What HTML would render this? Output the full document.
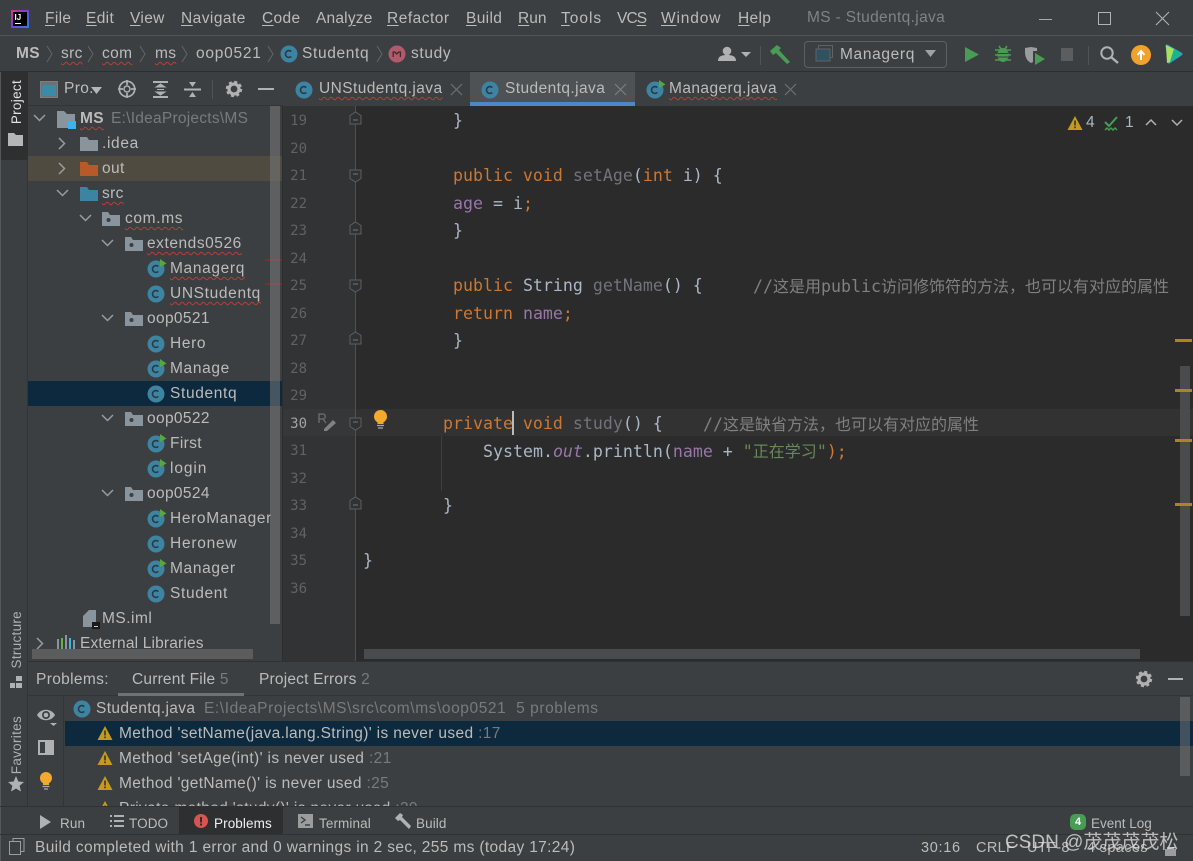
<!DOCTYPE html>
<html><head><meta charset="utf-8"><style>
html,body{margin:0;padding:0;background:#3c3f41}
#r{position:relative;width:1193px;height:861px;overflow:hidden;background:#3c3f41;font-family:"Liberation Sans","Noto Sans CJK SC",sans-serif;font-size:15.5px;letter-spacing:.35px;color:#bbbbbb}
.t{position:absolute;white-space:nowrap;line-height:20px;height:20px;margin-top:1px}
.b{position:absolute}
.s{text-decoration:underline wavy #b5403a 1px;text-underline-offset:3px;text-decoration-skip-ink:none}
.g{color:#787a7c}
.w{letter-spacing:.65px}
svg{position:absolute;overflow:visible}
.c{position:absolute;white-space:pre;font-family:"DejaVu Sans Mono","Noto Sans CJK SC",monospace;font-size:16.6px;letter-spacing:0;line-height:20px;color:#a9b7c6;margin-top:1px}
.c i.z{font-style:normal;font-family:"Noto Sans CJK SC",sans-serif;font-size:16px}
.k{color:#cc7832}.m{color:#72737a}.f{color:#9876aa}.q{color:#808080}.h{color:#6a8759}
.n{position:absolute;width:20px;left:287px;text-align:right;font-family:"DejaVu Sans Mono",monospace;font-size:14px;letter-spacing:0;line-height:20px;color:#606366;margin-top:1px}
.v{position:absolute;writing-mode:vertical-rl;transform:rotate(180deg);font-size:13.5px;letter-spacing:.3px;line-height:16px;white-space:nowrap}
.small{font-size:13.5px;letter-spacing:.1px}
u{text-underline-offset:2px}
</style></head><body><div id="r">
<svg width="0" height="0" style="position:absolute">
<defs>
<g id="cl"><circle cx="9" cy="9" r="8.5" fill="#3d84a3"/><path d="M11.3 6.6A3.4 3.4 0 1 0 11.3 11.4" fill="none" stroke="#2b3a42" stroke-width="1.6"/></g>
<g id="cr"><use href="#cl"/><path d="M13 -1L19.500 3.500L13 7Z" fill="#56a83c"/></g>
<g id="fo"><path d="M0 2h7l2 3h9v11H0Z" fill="#8a949c"/></g>
<g id="pk"><path d="M0 1h6l2 3h10v11H0Z" fill="#8a949c"/><circle cx="6.5" cy="9" r="2" fill="#3c3f41"/></g>
<path id="dn" d="M0 0L5.5 5.5L11 0" fill="none" stroke="#9a9c9e" stroke-width="1.5"/>
<path id="rt" d="M0 0L5.5 5.5L0 11" fill="none" stroke="#9a9c9e" stroke-width="1.5"/>
<g id="wn"><path d="M7 0L14.5 14H-.5Z" fill="#c69a1b"/><rect x="6.2" y="4.5" width="1.6" height="5" fill="#33363a"/><rect x="6.2" y="10.5" width="1.6" height="1.7" fill="#33363a"/></g>
<g id="gr"><circle cx="8" cy="8" r="5" fill="none" stroke="#afb1b3" stroke-width="3.2"/><circle cx="8" cy="8" r="7" fill="none" stroke="#afb1b3" stroke-width="2.4" stroke-dasharray="3 2.5"/></g>
<path id="fu" d="M0 12V3.5L5.5 0L11 3.5V12Z" fill="#2f3133" stroke="#5d5f61"/>
<path id="fd" d="M0 0V8.5L5.5 12L11 8.5V0Z" fill="#2f3133" stroke="#5d5f61"/>
</defs></svg>

<!-- title/menu -->
<div class="b" style="left:0;top:35px;width:1193px;height:1px;background:#515354"></div>
<div class="b" style="left:11px;top:10px;width:18px;height:18px;background:linear-gradient(135deg,#e0337b,#7a3fd0 45%,#2b7fe0);"></div>
<div class="b" style="left:13px;top:12px;width:14px;height:14px;background:#000"></div>
<div class="t" style="left:14.5px;top:7px;font-size:8px;font-weight:bold;color:#fff;letter-spacing:0">IJ</div>
<div class="b" style="left:15px;top:23px;width:6px;height:1px;background:#fff"></div>
<div class="t" style="left:45px;top:8px"><u>F</u>ile</div>
<div class="t" style="left:86px;top:8px"><u>E</u>dit</div>
<div class="t" style="left:130px;top:8px"><u>V</u>iew</div>
<div class="t" style="left:181px;top:8px;letter-spacing:.45px"><u>N</u>avigate</div>
<div class="t" style="left:262px;top:8px"><u>C</u>ode</div>
<div class="t" style="left:316px;top:8px;letter-spacing:.2px">Anal<u>y</u>ze</div>
<div class="t" style="left:387px;top:8px;letter-spacing:.5px"><u>R</u>efactor</div>
<div class="t" style="left:466px;top:8px"><u>B</u>uild</div>
<div class="t" style="left:518px;top:8px;letter-spacing:0"><u>R</u>un</div>
<div class="t" style="left:561px;top:8px;letter-spacing:1px"><u>T</u>ools</div>
<div class="t" style="left:617px;top:8px;letter-spacing:-.9px">VC<u>S</u></div>
<div class="t" style="left:661px;top:8px;letter-spacing:.85px"><u>W</u>indow</div>
<div class="t" style="left:738px;top:8px"><u>H</u>elp</div>
<div class="t" style="left:807px;top:7px;color:#808284">MS - Studentq.java</div>
<div class="b" style="left:1039px;top:19px;width:13px;height:1px;background:#a8aaac"></div>
<div class="b" style="left:1098px;top:12px;width:11px;height:11px;border:1px solid #b0b2b4"></div>
<svg style="left:1156px;top:12px" width="13" height="13"><path d="M0 0L13 13M13 0L0 13" stroke="#b0b2b4" stroke-width="1.1"/></svg>

<!-- nav bar -->
<div class="b" style="left:0;top:71px;width:1193px;height:1px;background:#2c2e2f"></div>
<div class="t" style="left:16px;top:43px;font-weight:bold">MS</div>
<svg style="left:46px;top:46px" width="200" height="16"><g fill="none" stroke="#636567"><path d="M1 0L6 8L1 16"/><path d="M42 0L47 8L42 16"/><path d="M94 0L99 8L94 16"/><path d="M136 0L141 8L136 16"/><path d="M222 0L227 8L222 16"/></g></svg>
<div class="t s" style="left:61px;top:43px">src</div>
<div class="t s" style="left:102px;top:43px">com</div>
<div class="t s" style="left:155px;top:43px">ms</div>
<div class="t w" style="left:196px;top:43px;letter-spacing:.75px">oop0521</div>
<svg style="left:280px;top:45px" width="18" height="18"><use href="#cl"/></svg>
<div class="t w" style="left:302px;top:43px">Studentq</div>
<svg style="left:376px;top:46px" width="8" height="16"><path d="M1 0L6 8L1 16" fill="none" stroke="#636567"/></svg>
<svg style="left:388px;top:45px" width="18" height="18"><circle cx="9" cy="9" r="8.5" fill="#b05a6c"/><path d="M5.2 12V7h1.6l2 2 2-2h1.6v5" fill="none" stroke="#3a2b2f" stroke-width="1.3"/></svg>
<div class="t w" style="left:411px;top:43px">study</div>

<!-- toolbar right -->
<svg style="left:717px;top:46px" width="34" height="16"><circle cx="10" cy="5" r="4.3" fill="#afb1b3"/><path d="M1 15c0-5 4-6 9-6s9 1 9 6Z" fill="#afb1b3"/><path d="M24 6h10l-5 5Z" fill="#afb1b3"/></svg>
<div class="b" style="left:760px;top:46px;width:1px;height:19px;background:#515354"></div>
<svg style="left:770px;top:45px" width="21" height="19"><path d="M0 6L7 0L11 3L9 5L20 17L17 19L6 8L3 10Z" fill="#499c54"/></svg>
<div class="b" style="left:804px;top:41px;width:141px;height:25px;border:1px solid #5e6060;border-radius:4px"></div>
<svg style="left:816px;top:45px" width="17" height="17"><rect x="2.5" y=".5" width="14" height="12" fill="none" stroke="#5f6365"/><rect x="0" y="4" width="14" height="12" fill="#2f5261" stroke="#5f6365"/></svg>
<div class="t w" style="left:840px;top:44px">Managerq</div>
<svg style="left:925px;top:50px" width="11" height="7"><path d="M0 0H11L5.5 7Z" fill="#9fa1a3"/></svg>
<svg style="left:965px;top:47px" width="14" height="15"><path d="M0 0L14 7.5L0 15Z" fill="#499c54"/></svg>
<svg style="left:995px;top:45px" width="16" height="18"><ellipse cx="8" cy="10" rx="5.5" ry="7" fill="#499c54"/><path d="M0 5L16 5M0 10H16M0 15H16M4 1L6 4M12 1L10 4" stroke="#499c54" stroke-width="1.6"/><path d="M3 8.5H13M3 12H13" stroke="#3c3f41"/></svg>
<svg style="left:1025px;top:47px" width="21" height="18"><path d="M0 1L6 0L12 1V4H8V15L6 16C2 14 0 10 0 5Z" fill="#9a9c9e"/><path d="M10 6L20 12L10 18Z" fill="#499c54"/></svg>
<div class="b" style="left:1061px;top:48px;width:12px;height:13px;background:#5b5d5f"></div>
<div class="b" style="left:1088px;top:46px;width:1px;height:19px;background:#515354"></div>
<svg style="left:1100px;top:46px" width="19" height="18"><circle cx="7" cy="7" r="5.7" fill="none" stroke="#afb1b3" stroke-width="2"/><path d="M11 11L18 17" stroke="#afb1b3" stroke-width="2.4"/></svg>
<svg style="left:1131px;top:45px" width="20" height="20"><circle cx="10" cy="10" r="10" fill="#f2a12e"/><path d="M10 15V7M6.5 10L10 6L13.500 10" fill="none" stroke="#fff" stroke-width="2"/></svg>
<svg style="left:1165px;top:44px" width="18" height="20"><path d="M2 2L16 10L4 18Z" fill="#2aa0d8" stroke="#2aa0d8" stroke-width="3" stroke-linejoin="round"/><path d="M1 1L9 5L5 18L2 19Z" fill="#a8e05f"/><path d="M9 5L17 10L5 18Z" fill="#1cb58a"/></svg>

<!-- left strip -->
<div class="b" style="left:0;top:72px;width:1px;height:789px;background:#55585a"></div>
<div class="b" style="left:1px;top:72px;width:27px;height:88px;background:#2d2f30"></div>
<div class="b" style="left:27px;top:160px;width:1px;height:647px;background:#323436"></div>
<div class="v" style="left:9px;top:80px;color:#dfe1e2">Project</div>
<svg style="left:8px;top:132px" width="15" height="14"><path d="M0 1h6l2 2h7v11H0Z" fill="#b4b6b8"/></svg>
<div class="v" style="left:9px;top:611px;color:#adafb1">Structure</div>
<svg style="left:9px;top:675px" width="14" height="14"><rect x="7" y="1" width="6" height="5" fill="#afb1b3"/><rect x="1" y="8" width="5" height="5" fill="#afb1b3"/><rect x="7" y="8" width="6" height="5" fill="#afb1b3"/></svg>
<div class="v" style="left:9px;top:716px;color:#adafb1">Favorites</div>
<svg style="left:8px;top:776px" width="16" height="16"><path d="M8 0L10.300 5.500L16 6L11.600 9.800L13 15.500L8 12.500L3 15.500L4.400 9.800L0 6L5.700 5.500Z" fill="#afb1b3"/></svg>

<!-- project header -->
<svg style="left:40px;top:81px" width="19" height="17"><rect x=".5" y=".5" width="17" height="16" fill="#6e7072" stroke="#7c7e80"/><rect x="2" y="4" width="14" height="11" fill="#3d89a8"/></svg>
<div class="t" style="left:64px;top:78px">Pro.</div>
<svg style="left:91px;top:87px" width="11" height="7"><path d="M0 0H11L5.500 7Z" fill="#b4b6b8"/></svg>
<svg style="left:118px;top:80px" width="18" height="18"><circle cx="9" cy="9" r="7.7" fill="none" stroke="#afb1b3" stroke-width="1.7"/><circle cx="9" cy="9" r="3" fill="none" stroke="#afb1b3" stroke-width="1.500"/><path d="M9 0V5M9 13V18M0 9H5M13 9H18" stroke="#afb1b3" stroke-width="1.700"/></svg>
<svg style="left:152px;top:81px" width="17" height="17"><path d="M1 1H16M1 16H16" stroke="#afb1b3" stroke-width="2"/><path d="M4 6L8.500 3L13 6ZM4 11L8.500 14L13 11Z M5 8.500H12" fill="#afb1b3" stroke="#afb1b3"/></svg>
<svg style="left:184px;top:81px" width="17" height="17"><path d="M0 8.500H17" stroke="#afb1b3" stroke-width="2"/><path d="M5 1L12 1L8.500 6ZM5 16L12 16L8.500 11Z" fill="#afb1b3"/></svg>
<div class="b" style="left:212px;top:80px;width:1px;height:19px;background:#515354"></div>
<svg style="left:226px;top:81px" width="16" height="16"><use href="#gr"/></svg>
<div class="b" style="left:258px;top:88px;width:16px;height:2px;background:#afb1b3"></div>
<div class="b" style="left:28px;top:105px;width:255px;height:1px;background:#323436"></div>

<!-- tree -->
<div class="b" style="left:28px;top:156px;width:254px;height:25px;background:#4f4b41"></div>
<div class="b" style="left:28px;top:381px;width:254px;height:25px;background:#0d293e"></div>
<svg style="left:34px;top:115px" width="11" height="7"><use href="#dn"/></svg>
<svg style="left:57px;top:110px" width="22" height="20"><path d="M0 1h7l3 3h8v14H0Z" fill="#8a949c"/><rect x="11" y="11" width="8" height="8" fill="#3db4e8"/></svg>
<div class="t s" style="left:80px;top:108px;font-weight:bold">MS</div>
<div class="t g" style="left:111px;top:108px;letter-spacing:.25px">E:\IdeaProjects\MS</div>
<svg style="left:59px;top:138px" width="7" height="11"><use href="#rt"/></svg>
<svg style="left:80px;top:135px" width="18" height="18"><use href="#fo"/></svg>
<div class="t w" style="left:102px;top:133px">.idea</div>
<svg style="left:59px;top:163px" width="7" height="11"><use href="#rt"/></svg>
<svg style="left:80px;top:160px" width="18" height="18"><path d="M0 2h7l2 3h9v11H0Z" fill="#b85a28"/></svg>
<div class="t" style="left:102px;top:158px">out</div>
<svg style="left:57px;top:190px" width="11" height="7"><use href="#dn"/></svg>
<svg style="left:80px;top:185px" width="18" height="18"><path d="M0 2h7l2 3h9v11H0Z" fill="#3d84a3"/></svg>
<div class="t s" style="left:102px;top:183px">src</div>
<svg style="left:80px;top:215px" width="11" height="7"><use href="#dn"/></svg>
<svg style="left:102px;top:211px" width="18" height="18"><use href="#pk"/></svg>
<div class="t s w" style="left:125px;top:208px">com.ms</div>
<svg style="left:102px;top:240px" width="11" height="7"><use href="#dn"/></svg>
<svg style="left:125px;top:236px" width="18" height="18"><use href="#pk"/></svg>
<div class="t s w" style="left:147px;top:233px;letter-spacing:.55px">extends0526</div>
<svg style="left:147px;top:260px" width="18" height="18"><use href="#cr"/></svg>
<div class="t s w" style="left:170px;top:258px">Managerq</div>
<svg style="left:147px;top:285px" width="18" height="18"><use href="#cl"/></svg>
<div class="t s w" style="left:170px;top:283px">UNStudentq</div>
<div class="b" style="left:265px;top:259px;width:17px;height:2px;background:#7c2e2e"></div>
<div class="b" style="left:265px;top:283px;width:17px;height:2px;background:#7c2e2e"></div>
<svg style="left:102px;top:315px" width="11" height="7"><use href="#dn"/></svg>
<svg style="left:125px;top:311px" width="18" height="18"><use href="#pk"/></svg>
<div class="t" style="left:147px;top:308px">oop0521</div>
<svg style="left:147px;top:335px" width="18" height="18"><use href="#cl"/></svg>
<div class="t w" style="left:170px;top:333px">Hero</div>
<svg style="left:147px;top:360px" width="18" height="18"><use href="#cr"/></svg>
<div class="t w" style="left:170px;top:358px">Manage</div>
<svg style="left:147px;top:385px" width="18" height="18"><use href="#cl"/></svg>
<div class="t w" style="left:170px;top:383px">Studentq</div>
<svg style="left:102px;top:415px" width="11" height="7"><use href="#dn"/></svg>
<svg style="left:125px;top:411px" width="18" height="18"><use href="#pk"/></svg>
<div class="t" style="left:147px;top:408px">oop0522</div>
<svg style="left:147px;top:435px" width="18" height="18"><use href="#cr"/></svg>
<div class="t" style="left:170px;top:433px">First</div>
<svg style="left:147px;top:460px" width="18" height="18"><use href="#cr"/></svg>
<div class="t w" style="left:170px;top:458px;letter-spacing:.9px">login</div>
<svg style="left:102px;top:490px" width="11" height="7"><use href="#dn"/></svg>
<svg style="left:125px;top:486px" width="18" height="18"><use href="#pk"/></svg>
<div class="t" style="left:147px;top:483px">oop0524</div>
<svg style="left:147px;top:510px" width="18" height="18"><use href="#cr"/></svg>
<div class="t w" style="left:170px;top:508px">HeroManager</div>
<svg style="left:147px;top:535px" width="18" height="18"><use href="#cl"/></svg>
<div class="t w" style="left:170px;top:533px;letter-spacing:.75px">Heronew</div>
<svg style="left:147px;top:560px" width="18" height="18"><use href="#cr"/></svg>
<div class="t w" style="left:170px;top:558px">Manager</div>
<svg style="left:147px;top:585px" width="18" height="18"><use href="#cl"/></svg>
<div class="t w" style="left:170px;top:583px">Student</div>
<svg style="left:83px;top:610px" width="18" height="19"><path d="M0 6L6 0H13V12H9V17H0Z" fill="#8a949c"/><rect x="9" y="12" width="8" height="7" fill="#1a1a1a"/><rect x="11" y="16" width="4" height="1" fill="#ccc"/></svg>
<div class="t w" style="left:102px;top:608px;letter-spacing:.5px">MS.iml</div>
<svg style="left:37px;top:638px" width="7" height="11"><use href="#rt"/></svg>
<svg style="left:57px;top:635px" width="18" height="16"><g stroke-width="2"><path d="M1 4V16" stroke="#8a949c"/><path d="M5 3V16" stroke="#62b543"/><path d="M9 0V16" stroke="#8a949c"/><path d="M13 3V16" stroke="#3db4e8"/><path d="M17 5V16" stroke="#8a949c"/></g></svg>
<div class="t" style="left:80px;top:633px;letter-spacing:.17px">External Libraries</div>
<div class="b" style="left:270px;top:106px;width:10px;height:518px;background:rgba(120,122,124,.55)"></div>
<div class="b" style="left:32px;top:649px;width:221px;height:10px;background:#5a5c5d"></div>
<div class="b" style="left:282px;top:106px;width:1px;height:555px;background:#2b2c2d"></div>

<!-- tabs -->
<div class="b" style="left:283px;top:72px;width:910px;height:34px;background:#3c3f41"></div>
<div class="b" style="left:470px;top:72px;width:165px;height:34px;background:#4e5254"></div>
<div class="b" style="left:470px;top:102px;width:165px;height:4px;background:#4a88c7"></div>
<svg style="left:295px;top:81px" width="18" height="18"><use href="#cl"/></svg>
<div class="t s" style="left:319px;top:78px;letter-spacing:.42px">UNStudentq.java</div>
<svg style="left:451px;top:84px" width="11" height="11"><path d="M0 0L11 11M11 0L0 11" stroke="#6e7072" stroke-width="1.200"/></svg>
<svg style="left:481px;top:81px" width="18" height="18"><use href="#cl"/></svg>
<div class="t" style="left:505px;top:78px;letter-spacing:.42px">Studentq.java</div>
<svg style="left:615px;top:84px" width="11" height="11"><path d="M0 0L11 11M11 0L0 11" stroke="#7c7e80" stroke-width="1.200"/></svg>
<svg style="left:646px;top:81px" width="18" height="18"><use href="#cr"/></svg>
<div class="t s" style="left:669px;top:78px;letter-spacing:.42px">Managerq.java</div>
<svg style="left:785px;top:84px" width="11" height="11"><path d="M0 0L11 11M11 0L0 11" stroke="#6e7072" stroke-width="1.200"/></svg>

<!-- editor -->
<div class="b" style="left:283px;top:106px;width:910px;height:555px;background:#2b2b2b"></div>
<div class="b" style="left:283px;top:106px;width:72px;height:555px;background:#313335"></div>
<div class="b" style="left:283px;top:409px;width:72px;height:27px;background:#353739"></div>
<div class="b" style="left:356px;top:409px;width:837px;height:27px;background:#323232"></div>
<div class="b" style="left:355px;top:106px;width:1px;height:555px;background:#4f5153"></div>
<svg style="left:350px;top:112px" width="12" height="13"><use href="#fu"/><path d="M3 8H8" stroke="#777"/></svg>
<svg style="left:350px;top:170px" width="12" height="13"><use href="#fd"/><path d="M3 4H8" stroke="#777"/></svg>
<svg style="left:350px;top:222px" width="12" height="13"><use href="#fu"/><path d="M3 8H8" stroke="#777"/></svg>
<svg style="left:350px;top:280px" width="12" height="13"><use href="#fd"/><path d="M3 4H8" stroke="#777"/></svg>
<svg style="left:350px;top:332px" width="12" height="13"><use href="#fu"/><path d="M3 8H8" stroke="#777"/></svg>
<svg style="left:350px;top:418px" width="12" height="13"><use href="#fd"/><path d="M3 4H8" stroke="#777"/></svg>
<svg style="left:350px;top:497px" width="12" height="13"><use href="#fu"/><path d="M3 8H8" stroke="#777"/></svg>
<div class="n" style="top:110px">19</div><div class="n" style="top:138px">20</div><div class="n" style="top:165px">21</div><div class="n" style="top:193px">22</div><div class="n" style="top:220px">23</div><div class="n" style="top:248px">24</div><div class="n" style="top:275px">25</div><div class="n" style="top:303px">26</div><div class="n" style="top:330px">27</div><div class="n" style="top:358px">28</div><div class="n" style="top:385px">29</div><div class="n" style="top:413px;color:#a4a3a3">30</div><div class="n" style="top:440px">31</div><div class="n" style="top:468px">32</div><div class="n" style="top:495px">33</div><div class="n" style="top:523px">34</div><div class="n" style="top:550px">35</div><div class="n" style="top:578px">36</div>
<svg style="left:318px;top:413px" width="18" height="18"><path d="M1 10V1H5C8 1 8 6 5 6H1M5 6L8 10" fill="none" stroke="#6d6f71" stroke-width="1.300"/><path d="M6 16L15 7L18 10L9 18L6 18Z" fill="#7f8183"/></svg>
<svg style="left:373px;top:410px" width="15" height="20"><circle cx="7.500" cy="6.500" r="6.500" fill="#f2a92e"/><rect x="4.500" y="11" width="6" height="3" fill="#f2a92e"/><path d="M4 15.500H11M5 18H10" stroke="#a9a9a9" stroke-width="1.300"/></svg>
<div class="b" style="left:441px;top:436px;width:1px;height:55px;background:#3e3e3e"></div>

<div class="c" style="left:453px;top:110px">}</div>
<div class="c" style="left:453px;top:165px"><span class="k">public void </span><span class="m">setAge</span>(<span class="k">int</span> i) {</div>
<div class="c" style="left:453px;top:193px"><span class="f">age</span> = i<span class="k">;</span></div>
<div class="c" style="left:453px;top:220px">}</div>
<div class="c" style="left:453px;top:275px"><span class="k">public</span> String <span class="m">getName</span>() {     </div>
<div class="c q" style="left:753px;top:274px;color:#808080">//<i class="z">这是用</i>public<i class="z">访问修饰符的方法，也可以有对应的属性</i></div>
<div class="c" style="left:453px;top:303px"><span class="k">return</span> <span class="f">name</span><span class="k">;</span></div>
<div class="c" style="left:453px;top:330px">}</div>
<div class="c" style="left:443px;top:413px"><span class="k">private void </span><span class="m">study</span>() {</div>
<div class="c q" style="left:703px;top:412px;color:#808080">//<i class="z">这是缺省方法，也可以有对应的属性</i></div>
<div class="b" style="left:512px;top:411px;width:2px;height:24px;background:#bbbbbb"></div>
<div class="c" style="left:483px;top:439px">System.<span class="f" style="font-style:italic">out</span>.println(<span class="f">name</span> + <span class="h">"<i class="z">正在学习</i>"</span><span class="k">);</span></div>
<div class="c" style="left:443px;top:495px">}</div>
<div class="c" style="left:363px;top:550px">}</div>

<svg style="left:1068px;top:116px" width="15" height="15"><use href="#wn"/></svg>
<div class="t" style="left:1086px;top:112px;color:#a9b7c6">4</div>
<svg style="left:1104px;top:116px" width="15" height="16"><path d="M1 6L5 10L13 1" fill="none" stroke="#499c54" stroke-width="2"/><path d="M1 14L3 12L5 14L7 12L9 14L11 12L13 14" fill="none" stroke="#499c54" stroke-width="1.400"/></svg>
<div class="t" style="left:1125px;top:112px;color:#a9b7c6">1</div>
<svg style="left:1145px;top:119px" width="12" height="7"><path d="M1 6L6 1L11 6" fill="none" stroke="#b0b2b4" stroke-width="1.500"/></svg>
<svg style="left:1171px;top:119px" width="12" height="7"><path d="M1 1L6 6L11 1" fill="none" stroke="#b0b2b4" stroke-width="1.500"/></svg>
<div class="b" style="left:1180px;top:366px;width:10px;height:250px;background:#4a4b4c"></div>
<div class="b" style="left:1175px;top:339px;width:17px;height:3px;background:#a8871c"></div>
<div class="b" style="left:1175px;top:389px;width:17px;height:3px;background:#a8871c"></div>
<div class="b" style="left:1175px;top:439px;width:17px;height:3px;background:#a8871c"></div>
<div class="b" style="left:1175px;top:503px;width:17px;height:3px;background:#a8871c"></div>
<div class="b" style="left:364px;top:649px;width:776px;height:10px;background:#4a4b4c"></div>

<!-- problems -->
<div class="b" style="left:28px;top:661px;width:1165px;height:146px;background:#3c3f41"></div>
<div class="b" style="left:28px;top:661px;width:1165px;height:1px;background:#2f3132"></div>
<div class="b" style="left:28px;top:695px;width:1165px;height:1px;background:#323436"></div>
<div class="t" style="left:36px;top:669px">Problems:</div>
<div class="t" style="left:132px;top:669px;letter-spacing:.2px">Current File <span class="g">5</span></div>
<div class="b" style="left:118px;top:693px;width:126px;height:3px;background:#6f7173"></div>
<div class="t" style="left:259px;top:669px;letter-spacing:.2px">Project Errors <span class="g">2</span></div>
<svg style="left:1136px;top:671px" width="16" height="16"><use href="#gr"/></svg>
<div class="b" style="left:1168px;top:678px;width:15px;height:2px;background:#afb1b3"></div>
<div class="b" style="left:63px;top:696px;width:1px;height:111px;background:#323436"></div>
<svg style="left:37px;top:708px" width="20" height="18"><path d="M0 7C4 0 14 0 18 7C14 14 4 14 0 7Z" fill="#afb1b3"/><circle cx="9" cy="7" r="4" fill="#3c3f41"/><circle cx="9" cy="7" r="2.300" fill="#afb1b3"/><path d="M13 15H20L16.500 18Z" fill="#afb1b3"/></svg>
<svg style="left:38px;top:740px" width="16" height="15"><rect x="0" y="0" width="16" height="15" fill="#afb1b3"/><rect x="2" y="2" width="5" height="11" fill="#3c3f41"/></svg>
<svg style="left:39px;top:772px" width="14" height="19"><circle cx="7" cy="6" r="6" fill="#f2a92e"/><rect x="4" y="10" width="6" height="3" fill="#f2a92e"/><path d="M3.500 14.500H10.500M5 17H9" stroke="#a9a9a9" stroke-width="1.300"/></svg>
<svg style="left:73px;top:700px" width="18" height="18"><use href="#cl"/></svg>
<div class="t" style="left:96px;top:698px">Studentq.java</div>
<div class="t g" style="left:204px;top:698px;letter-spacing:.58px">E:\IdeaProjects\MS\src\com\ms\oop0521&nbsp; 5 problems</div>
<div class="b" style="left:65px;top:721px;width:1128px;height:25px;background:#0d293e"></div>
<svg style="left:98px;top:726px" width="15" height="15"><use href="#wn"/></svg>
<div class="t" style="left:119px;top:723px">Method 'setName(java.lang.String)' is never used <span class="g">:17</span></div>
<svg style="left:98px;top:751px" width="15" height="15"><use href="#wn"/></svg>
<div class="t" style="left:119px;top:748px">Method 'setAge(int)' is never used <span class="g">:21</span></div>
<svg style="left:98px;top:776px" width="15" height="15"><use href="#wn"/></svg>
<div class="t" style="left:119px;top:773px">Method 'getName()' is never used <span class="g">:25</span></div>
<div class="b" style="left:65px;top:796px;width:800px;height:10px;overflow:hidden">
<svg style="left:33px;top:5px" width="15" height="15"><use href="#wn"/></svg>
<div class="t" style="left:54px;top:2px">Private method 'study()' is never used <span class="g">:30</span></div></div>
<div class="b" style="left:1180px;top:697px;width:10px;height:79px;background:rgba(120,122,124,.5)"></div>

<!-- bottom toolbar -->
<div class="b" style="left:0;top:806px;width:1193px;height:1px;background:#2f3132"></div>
<div class="b" style="left:179px;top:807px;width:104px;height:27px;background:#2d2f30"></div>
<svg style="left:40px;top:815px" width="11" height="14"><path d="M0 0L11 7L0 14Z" fill="#afb1b3"/></svg>
<div class="t small" style="left:60px;top:813px">Run</div>
<svg style="left:110px;top:815px" width="14" height="12"><path d="M0 1H2M4 1H14M0 6H2M4 6H14M0 11H2M4 11H14" stroke="#afb1b3" stroke-width="2"/></svg>
<div class="t small" style="left:129px;top:813px">TODO</div>
<svg style="left:194px;top:814px" width="14" height="14"><circle cx="7" cy="7" r="7" fill="#d9534f"/><rect x="6" y="3" width="2" height="5.500" fill="#2d2f30"/><rect x="6" y="9.500" width="2" height="2" fill="#2d2f30"/></svg>
<div class="t small" style="left:214px;top:813px;color:#f0f0f0">Problems</div>
<svg style="left:298px;top:814px" width="15" height="14"><rect width="15" height="14" fill="#9a9c9e"/><path d="M3 3L7 6L3 9M7 11H12" fill="none" stroke="#3c3f41" stroke-width="1.400"/></svg>
<div class="t small" style="left:319px;top:813px">Terminal</div>
<svg style="left:395px;top:813px" width="16" height="16"><path d="M0 5L5 0L8 2L7 4L16 13L14 16L5 7L3 8Z" fill="#afb1b3"/></svg>
<div class="t small" style="left:416px;top:813px">Build</div>
<div class="b" style="left:1070px;top:814px;width:16px;height:16px;background:#499c54;border-radius:5px;color:#fff;font-size:11px;font-weight:bold;line-height:16px;text-align:center;letter-spacing:0">4</div>
<div class="t small" style="left:1091px;top:813px;letter-spacing:0">Event Log</div>

<!-- status bar -->
<div class="b" style="left:0;top:834px;width:1193px;height:1px;background:#2f3132"></div>
<svg style="left:9px;top:838px" width="16" height="18"><rect x="4" y=".5" width="11" height="13" fill="#3c3f41" stroke="#9a9c9e"/><rect x=".5" y="3.500" width="11" height="13" fill="#3c3f41" stroke="#9a9c9e"/></svg>
<div class="t" style="left:35px;top:837px">Build completed with 1 error and 0 warnings in 2 sec, 255 ms (today 17:24)</div>
<div class="t" style="left:921px;top:837px;font-size:14.500px;letter-spacing:.7px">30:16</div>
<div class="t" style="left:976px;top:837px;font-size:14.500px">CRLF</div>
<div class="t" style="left:1027px;top:837px;font-size:14.500px">UTF-8</div>
<div class="t" style="left:1087px;top:837px;font-size:14.500px">4 spaces</div>
<svg style="left:1165px;top:845px" width="11" height="11"><path d="M2 4V2H9V4H11V11H0V4Z" fill="#9a9c9e"/></svg>
<div class="t" style="left:1005px;top:831px;font-size:19px;letter-spacing:0;color:rgba(225,225,225,.78);height:22px;line-height:22px">CSDN @茂茂茂茂松</div>
</div></body></html>
